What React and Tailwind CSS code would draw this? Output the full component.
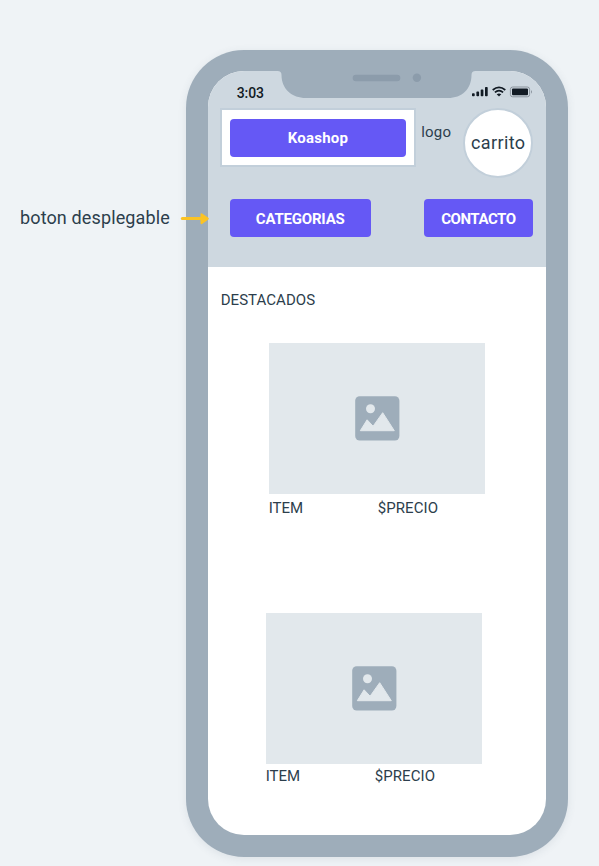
import React from "react";

function Button({ children, className }) {
  return (
    <button
      className={`flex h-[38px] shrink-0 items-center justify-center whitespace-nowrap rounded-[4px] bg-[#6558f5] pt-[2px] text-[15px] font-bold leading-none text-white ${className}`}
    >
      {children}
    </button>
  );
}

function Notch() {
  return (
    <svg className="absolute left-[69px] top-[-1px]" width="200" height="29" viewBox="0 0 200 29">
      <path d="M0 0H200V1H198.500Q194.500 1 194.500 5C194.500 19 185 28 171 28H29C15 28 4.500 19 4.500 5Q4.500 1 0.500 1H0Z" fill="#9eadba" />
      <rect x="75.700" y="4.800" width="47.600" height="6.400" rx="3.200" fill="#8c9cab" />
      <circle cx="139.900" cy="7.800" r="4.200" fill="#8c9cab" />
    </svg>
  );
}

function StatusIcons() {
  return (
    <svg className="shrink-0" width="62" height="14" viewBox="0 0 62 14">
      <g fill="#121b24">
        <rect x="1" y="8.300" width="2.700" height="3" rx=".8" />
        <rect x="5.400" y="6.600" width="2.700" height="4.700" rx=".8" />
        <rect x="9.700" y="4.600" width="2.700" height="6.700" rx=".8" />
        <rect x="14" y="2" width="2.700" height="9.300" rx=".8" />
        <path d="M25.700 9.200Q28 7.600 30.300 9.200L28 11.400Z" />
        <rect x="41" y="3.600" width="16" height="6.600" rx="1" />
      </g>
      <g fill="none" stroke="#121b24" strokeWidth="1.700">
        <path d="M21.700 5Q28 -.3 34.300 5" />
        <path d="M23.900 7.400Q28 3.800 32.100 7.400" />
      </g>
      <rect x="39.400" y="2" width="19.200" height="9.800" rx="2.300" fill="none" stroke="#8b949d" />
      <path d="M60 5.100Q62 6.900 60 8.700Z" fill="#8b949d" />
    </svg>
  );
}

function PictureIcon() {
  return (
    <svg width="45" height="45" viewBox="0 0 45 45">
      <rect x=".2" y=".3" width="44.200" height="44.300" rx="4.500" fill="#9eadba" />
      <circle cx="15.500" cy="12.800" r="4.500" fill="#e2e8ec" />
      <path d="M5.300 34.700L12.100 23.800L18.100 30.200L27.700 16.700L39.300 34.700Z" fill="#e2e8ec" stroke="#e2e8ec" strokeWidth="1" strokeLinejoin="round" />
    </svg>
  );
}

function Product({ className, captionClass }) {
  return (
    <article className={`w-[216px] ${className}`}>
      <div className="flex h-[151px] items-center justify-center bg-[#e2e8ec] pl-[2px] pt-px">
        <PictureIcon />
      </div>
      <div className={`flex text-[15px] leading-[18px] ${captionClass}`}>
        <span className="w-[109px]">ITEM</span>
        <span className="tracking-[0.1px]">$PRECIO</span>
      </div>
    </article>
  );
}

export default function App() {
  return (
    <main className="flex h-[866px] w-[599px] overflow-hidden bg-[#eff3f6] font-['Roboto',sans-serif] text-[#2c3e4c]">
      <aside className="relative w-[186px] shrink-0 pl-5 pt-[206px]">
        <p className="whitespace-nowrap text-[18px] leading-6 tracking-[0.13px]">boton desplegable</p>
        <svg className="absolute left-[180px] top-[211px] z-10" width="30" height="15" viewBox="0 0 30 15">
          <path d="M2.300 7.600H22" stroke="#fbc324" strokeWidth="3" strokeLinecap="round" />
          <path d="M21.500 3.300L27.800 7.600L21.500 12.200Z" fill="#fbc324" stroke="#fbc324" strokeWidth="2" strokeLinejoin="round" />
        </svg>
      </aside>

      <section className="mt-[49.500px] h-[807px] w-[382px] shrink-0 rounded-[58px] bg-[#9eadba] pl-[21.700px] pt-[21.500px] shadow-[0_2px_8px_rgba(60,80,100,0.1)]">
        <div className="relative h-[764px] w-[338.700px] overflow-hidden rounded-[36px] bg-white">
          <header className="h-[195.600px] bg-[#ced8e0]">
            <Notch />
            <div className="flex h-[37px] items-start justify-between pl-[29px] pr-[13px] pt-[14px]">
              <span className="pt-px text-[14px] font-medium leading-[15px] tracking-[-0.1px] text-[#121b24]">3:03</span>
              <StatusIcons />
            </div>
            <div className="flex pl-3">
              <div className="flex h-[59px] w-[196.500px] shrink-0 items-center justify-center border-2 border-[#c2cfda] bg-white">
                <Button className="w-[176px] tracking-[0.2px]">Koashop</Button>
              </div>
              <span className="ml-[5px] mt-[15px] w-[42px] text-[15px] leading-[18px] tracking-[0.2px]">logo</span>
              <div className="flex h-[70px] w-[70px] shrink-0 items-center justify-center rounded-full border-2 border-[#c2cfda] bg-white pb-[2px] text-[18px] tracking-[0.4px]">
                carrito
              </div>
            </div>
            <nav className="mt-[21px] flex justify-between pl-[22px] pr-[13.500px]">
              <Button className="w-[141px] tracking-[-0.2px]">CATEGORIAS</Button>
              <Button className="w-[109px] tracking-[-0.45px]">CONTACTO</Button>
            </nav>
          </header>

          <h2 className="ml-[13px] mt-6 text-[15px] leading-[18px] tracking-[0.05px]">DESTACADOS</h2>
          <Product className="ml-[61px] mt-[34.400px]" captionClass="pt-[5px]" />
          <Product className="ml-[58px] mt-24" captionClass="pt-[3px]" />
        </div>
      </section>
    </main>
  );
}
